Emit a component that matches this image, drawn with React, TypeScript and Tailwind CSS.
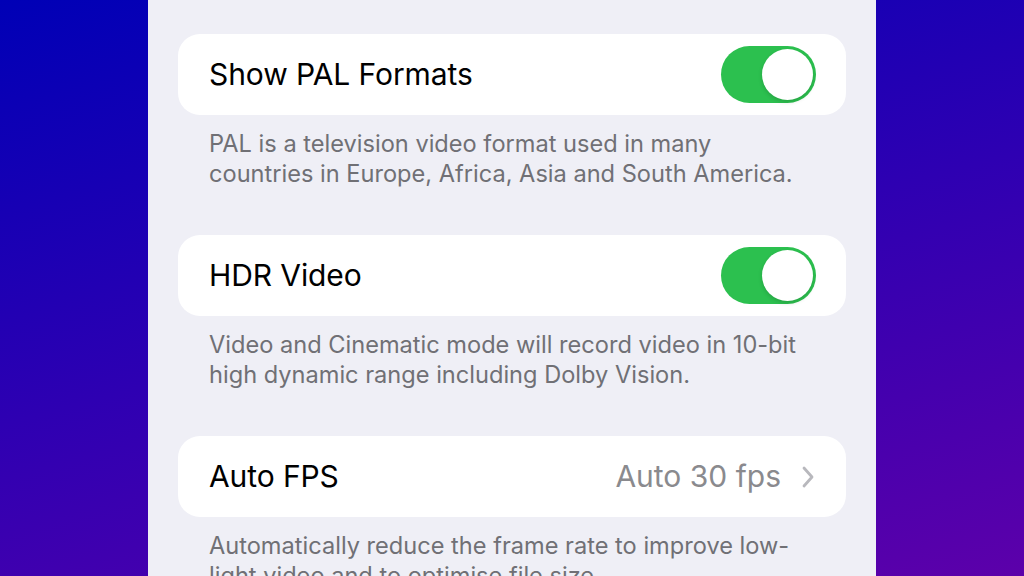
import React from "react";

function Toggle() {
  return (
    <div className="w-[95px] h-[57px] rounded-full bg-[#2cc04f] flex items-center justify-end pr-[3px]">
      <div className="w-[51px] h-[51px] rounded-full bg-white shadow-[0_2px_4px_rgba(0,0,0,0.15)]" />
    </div>
  );
}

function Section({ label, right, footer }: { label: string; right: React.ReactNode; footer: string[] }) {
  return (
    <div className="flex flex-col">
      <div className="h-[81px] bg-white rounded-[22px] flex items-center justify-between pl-[31px] pr-[30px]">
        <span className="text-[30px] text-black tracking-[-0.1px]">{label}</span>
        {right}
      </div>
      <div className="pl-[31px] pt-[14px] text-[23.6px] leading-[30px] text-[#707075]">
        {footer.map((l, i) => (
          <div key={i} className="whitespace-nowrap">{l}</div>
        ))}
      </div>
    </div>
  );
}

export default function App() {
  return (
    <div
      className="w-[1024px] h-[576px] overflow-hidden flex justify-center bg-[linear-gradient(165deg,#0000b6_0%,#2e00b2_50%,#5c00aa_100%)]"
      style={{ fontFamily: "Inter, 'Noto Sans', sans-serif" }}
    >
      <div className="w-[728px] h-full bg-[#efeff6] px-[30px] pt-[34px] flex flex-col gap-[46px]">
        <Section
          label="Show PAL Formats"
          right={<Toggle />}
          footer={[
            "PAL is a television video format used in many",
            "countries in Europe, Africa, Asia and South America.",
          ]}
        />
        <Section
          label="HDR Video"
          right={<Toggle />}
          footer={[
            "Video and Cinematic mode will record video in 10-bit",
            "high dynamic range including Dolby Vision.",
          ]}
        />
        <Section
          label="Auto FPS"
          right={
            <div className="flex items-center gap-[20px]">
              <span className="text-[30px] text-[#8a8a8e]">Auto 30 fps</span>
              <svg width="14" height="24" viewBox="0 0 14 24" className="mr-[1px]">
                <path d="M3 3 L11 12 L3 21" fill="none" stroke="#b8b8bd" strokeWidth="2.8" strokeLinecap="round" strokeLinejoin="round" />
              </svg>
            </div>
          }
          footer={[
            "Automatically reduce the frame rate to improve low-",
            "light video and to optimise file size.",
          ]}
        />
      </div>
    </div>
  );
}
